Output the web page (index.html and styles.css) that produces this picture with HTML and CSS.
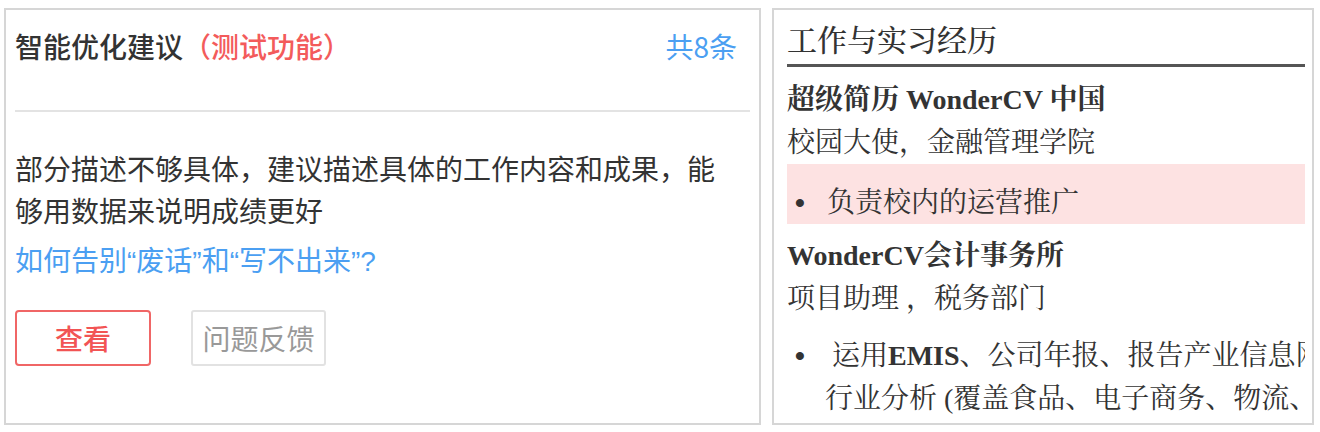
FILE: index.html
```html
<!DOCTYPE html>
<html lang="zh-CN">
<head>
<meta charset="utf-8">
<title>智能优化建议</title>
<link rel="stylesheet" href="styles.css">
</head>
<body>
<div class="page">
  <section class="panel suggest">
    <header class="s-head">
      <h2 class="s-title">智能优化建议<span class="tag">（测试功能）</span></h2>
      <span class="count">共8条</span>
    </header>
    <p class="s-text">部分描述不够具体，建议描述具体的工作内容和成果，能够用数据来说明成绩更好</p>
    <a class="s-link">如何告别“废话”和“写不出来”?</a>
    <div class="s-actions">
      <button class="btn btn-primary">查看</button>
      <button class="btn btn-plain">问题反馈</button>
    </div>
  </section>
  <section class="panel preview">
    <div class="clip">
      <div class="doc">
        <h3 class="d-title">工作与实习经历</h3>
        <div class="d-org">超级简历 WonderCV 中国</div>
        <div class="d-role">校园大使，金融管理学院</div>
        <ul class="d-list hl">
          <li><span class="dot">•</span><span class="li-text">负责校内的运营推广</span></li>
        </ul>
        <div class="d-org d-org2">WonderCV会计事务所</div>
        <div class="d-role">项目助理 ，税务部门</div>
        <ul class="d-list d-list2">
          <li><span class="dot">•</span><span class="li-text">&nbsp;运用<b>EMIS</b>、公司年报、报告产业信息网进行<br>行业分析 (覆盖食品、电子商务、物流、零售等行业)</span></li>
        </ul>
      </div>
    </div>
  </section>
</div>
</body>
</html>
```

FILE: styles.css
```css
html, body {
  margin: 0;
  padding: 0;
  background: #fff;
}

.page {
  display: flex;
  align-items: flex-start;
  gap: 11px;
  padding: 8px 0 0 4px;
}

.panel {
  box-sizing: border-box;
  height: 417px;
  border: 2px solid #d6d6d6;
  background: #fff;
  overflow: hidden;
}

/* ---------- left: suggestion card ---------- */
.suggest {
  width: 757px;
  padding: 0 9px;
  font-family: "Noto Sans CJK SC", "Noto Sans", sans-serif;
  color: #333;
}

.s-head {
  display: flex;
  justify-content: space-between;
  align-items: center;
  padding: 16px 13px 44px 0;
  border-bottom: 2px solid #e3e3e3;
  line-height: 40px;
}

.s-title {
  margin: 0;
  font-size: 28px;
  font-weight: 500;
  color: #333;
}

.tag {
  color: #f35b5b;
}

.count {
  font-size: 28px;
  color: #4b9ff2;
}

.s-text {
  margin: 35px 0 0;
  width: 715px;
  font-size: 28px;
  line-height: 42px;
  color: #333;
}

.s-link {
  display: block;
  margin-top: 11px;
  font-family: "Liberation Sans", "Noto Sans CJK SC", sans-serif;
  font-size: 28px;
  line-height: 40px;
  color: #4b9ff2;
}

.s-actions {
  display: flex;
  gap: 40px;
  margin-top: 28px;
}

.btn {
  box-sizing: border-box;
  height: 56px;
  padding: 0;
  font-family: inherit;
  font-size: 28px;
  background: #fff;
}

.btn-primary {
  width: 136px;
  border: 2px solid #f06666;
  border-radius: 4px;
  color: #f25454;
  font-weight: 500;
}

.btn-plain {
  width: 135px;
  border: 2px solid #e2e2e2;
  border-radius: 3px;
  color: #999;
}

/* ---------- right: resume preview ---------- */
.preview {
  width: 542px;
  padding: 0 7px 0 13px;
}

.clip {
  height: 100%;
  overflow: hidden;
}

.doc {
  width: 600px;
  white-space: nowrap;
  font-family: "Liberation Serif", "Noto Serif CJK SC", "Noto Sans CJK SC", serif;
  font-size: 28px;
  color: #333;
}

.d-title {
  margin: 0;
  padding: 9px 0 1px;
  font-size: 30px;
  font-weight: 500;
  line-height: 44px;
  color: #333;
  border-bottom: 3px solid #555;
}

.d-org {
  margin-top: 11px;
  font-weight: 700;
  line-height: 44px;
}

.d-org2 {
  margin-top: 10px;
}

.d-role {
  line-height: 42px;
}

.d-list {
  margin: 0;
  padding: 0;
  list-style: none;
}

.d-list li {
  display: flex;
}

.dot {
  box-sizing: border-box;
  width: 38px;
  padding-left: 8px;
  flex: none;
  font-family: "Liberation Sans", sans-serif;
  font-weight: 700;
}

.hl {
  padding-top: 18px;
  line-height: 42px;
  background: #fde2e2;
}

.hl .li-text {
  padding-left: 2px;
}

.d-list2 {
  margin-top: 14px;
  line-height: 43px;
}
```
